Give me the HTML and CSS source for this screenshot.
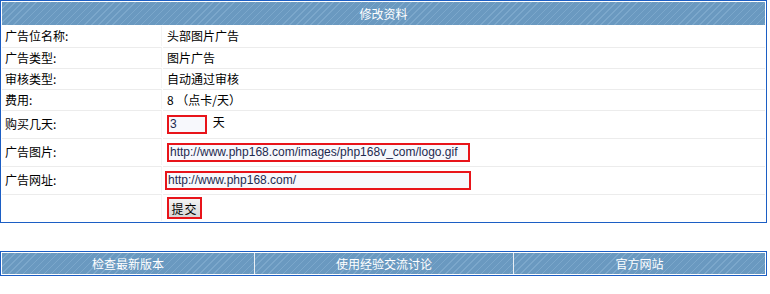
FILE: index.html
```html
<!DOCTYPE html>
<html lang="zh-cn">
<head>
  <meta charset="UTF-8">
  <title>修改资料</title>
  <link rel="stylesheet" href="styles.css">
</head>
<body>
  <table class="box">
    <tr class="head">
      <td colspan="2">修改资料</td>
    </tr>
    <tr class="row">
      <td class="label">广告位名称:</td>
      <td class="value">头部图片广告</td>
    </tr>
    <tr class="row">
      <td class="label">广告类型:</td>
      <td class="value">图片广告</td>
    </tr>
    <tr class="row">
      <td class="label">审核类型:</td>
      <td class="value">自动通过审核</td>
    </tr>
    <tr class="row">
      <td class="label">费用:</td>
      <td class="value">8 （点卡/天）</td>
    </tr>
    <tr class="row tall">
      <td class="label">购买几天:</td>
      <td class="value"><input class="txt days" type="text" value="3"> 天</td>
    </tr>
    <tr class="row tall">
      <td class="label">广告图片:</td>
      <td class="value"><input class="txt url" type="text" value="http://www.php168.com/images/php168v_com/logo.gif"></td>
    </tr>
    <tr class="row tall">
      <td class="label">广告网址:</td>
      <td class="value"><input class="txt url link" type="text" value="http://www.php168.com/"></td>
    </tr>
    <tr class="row tall">
      <td class="label"></td>
      <td class="value"><button class="submit">提交</button></td>
    </tr>
  </table>

  <table class="box foot">
    <tr class="head">
      <td class="c1">检查最新版本</td>
      <td class="c2">使用经验交流讨论</td>
      <td class="c3">官方网站</td>
    </tr>
  </table>
</body>
</html>
```

FILE: styles.css
```css
body {
  margin: 0;
  background-color: #fff;
  font-family: "Noto Sans CJK SC", "DejaVu Sans", sans-serif;
  font-size: 12px;
  line-height: 16px;
  color: #000;
}
.box {
  width: 767px;
  border: 1px solid #1c5ec4;
  border-collapse: separate;
  border-spacing: 1px;
  padding: 0;
}
.box td {
  padding: 0;
}
.head td {
  height: 23px;
  color: #fff;
  text-align: center;
  background-color: #6a99c0;
  background-image: repeating-linear-gradient(135deg, #6a99c0 0, #6a99c0 4px, #7ba7cb 4px, #7ba7cb 5px);
}
.row td {
  height: 19px;
  border-top: 1px solid #ececec;
  background-color: #fff;
  vertical-align: middle;
}
.row:nth-child(2) td {
  border-top: none;
  height: 20px;
}
.row .label {
  width: 156px;
  padding-left: 3px;
  border-right: 1px solid #f4f4f4;
}
.row .value {
  padding-left: 4px;
}
.row.tall td {
  height: 26px;
}
.txt {
  height: 15px;
  padding: 0 1px;
  border: 2px solid #e8141a;
  background-color: #f7f8fc;
  font-family: "Liberation Sans", sans-serif;
  font-size: 12px;
  color: #1e2a50;
  box-sizing: content-box;
  vertical-align: middle;
}
.days {
  width: 34px;
  margin-right: 3px;
}
.url {
  width: 297px;
}
.link {
  width: 300px;
  margin-left: -2px;
}
.submit {
  height: 22px;
  width: 35px;
  padding: 0;
  border: 2px solid #e8141a;
  background: linear-gradient(#f4f4f4, #d6d6d6);
  font-family: "Noto Sans CJK SC", sans-serif;
  font-size: 12px;
  letter-spacing: 1px;
  vertical-align: middle;
}
.foot {
  margin-top: 28px;
  border-spacing: 0;
  padding: 1px;
}
.foot td {
  height: 21px;
  border-left: 1px solid #e8eef4;
}
.foot .c1 {
  width: 252px;
  border-left: none;
}
.foot .c2 {
  width: 258px;
}
```
